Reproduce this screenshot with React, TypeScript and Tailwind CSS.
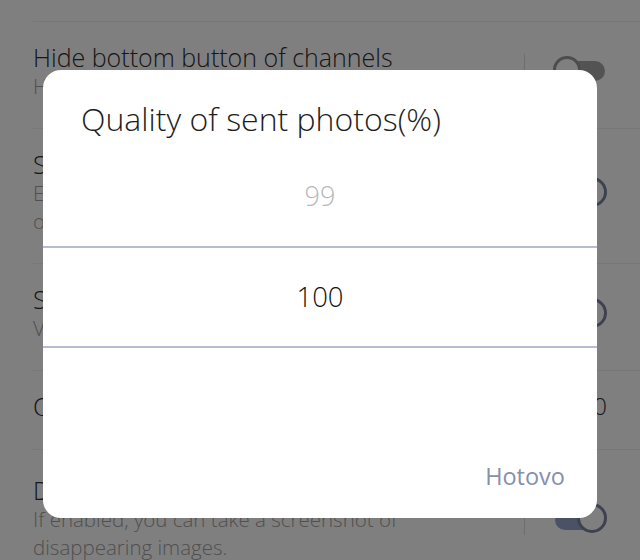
import React from "react";

type Row = {
  title: string;
  lines?: string[];
  control: "on" | "off" | "value";
  pt?: string;
};

const rows: Row[] = [
  { title: "Hide bottom button of channels", lines: ["Hide the mute button at the bottom."], control: "off" },
  {
    title: "Show original message",
    lines: ["Enable the translate button to show", "original text of the message."],
    control: "on",
  },
  { title: "Send photos as files", lines: ["Voice messages are sent in HD."], control: "on" },
  { title: "Quality of sent photos(%)", control: "value" },
  {
    title: "Disable screenshot protection",
    lines: ["If enabled, you can take a screenshot of", "disappearing images."],
    control: "on",
    pt: "pt-[25px]",
  },
];

function Toggle({ on }: { on: boolean }) {
  if (on) {
    return (
      <div className="relative flex h-[30px] w-[54px] items-center">
        <div className="ml-[2px] mt-[4px] h-[20px] w-[44px] rounded-full bg-[#98a4cc]" />
        <div className="absolute right-0 top-0 h-[30px] w-[30px] rounded-full border-[3px] border-[#7a84a0] bg-white" />
      </div>
    );
  }
  return (
    <div className="relative flex h-[30px] w-[54px] items-center">
      <div className="ml-[8px] h-[20px] w-[44px] rounded-full bg-[#a6a6a6]" />
      <div className="absolute left-0 top-0 h-[28px] w-[28px] rounded-full border-[3px] border-[#9a9a9a] bg-white" />
    </div>
  );
}

function SettingRow({ row }: { row: Row }) {
  return (
    <div className={`flex items-center border-b border-[#eeeeee] pr-[33px] ${row.pt ?? "pt-[20px]"} pb-[28px]`}>
      <div className="min-w-0 flex-1">
        <div className="text-[25px] font-light leading-[30px] text-[#2e2e2e]">{row.title}</div>
        {row.lines?.map((l) => (
          <div key={l} className="text-[20.5px] font-light leading-[28px] text-[#a0a0a0]">
            {l}
          </div>
        ))}
      </div>
      {row.control === "value" ? (
        <div className="text-[24px] font-light leading-[30px] text-[#333333]">0</div>
      ) : (
        <div className="flex items-center">
          <div className="h-[34px] w-px bg-[#dcdcdc]" />
          <div className="ml-[28px]">
            <Toggle on={row.control === "on"} />
          </div>
        </div>
      )}
    </div>
  );
}

export default function App() {
  return (
    <div
      className="relative h-[560px] w-[640px] overflow-hidden bg-white"
      style={{ fontFamily: "'Open Sans', Lato, sans-serif" }}
    >
      <div className="ml-[33px] h-[22px] border-b border-[#eeeeee]" />
      <div className="ml-[33px]">
        {rows.map((r) => (
          <SettingRow key={r.title} row={r} />
        ))}
      </div>

      <div className="absolute inset-0 flex justify-center bg-black/50 pt-[70px]">
        <div className="flex h-[448px] w-[554px] flex-col rounded-[18px] bg-white">
          <div className="h-[76px] pl-[38px] pt-[29px] text-[32px] font-light leading-[40px] text-[#1e1e1e]">
            Quality of sent photos(%)
          </div>
          <div className="flex flex-col">
            <div className="flex h-[100px] items-center justify-center text-[27px] font-light text-[#b8b8b8]">99</div>
            <div className="h-[2px] bg-[#b6bdd3]" />
            <div className="flex h-[98px] items-center justify-center text-[27.5px] font-light text-[#111111]">100</div>
            <div className="h-[2px] bg-[#b6bdd3]" />
            <div className="h-[98px]" />
          </div>
          <div className="flex justify-end pr-[32px] pt-[15px]">
            <span className="text-[23.5px] font-normal leading-[30px] text-[#8590ad]">Hotovo</span>
          </div>
        </div>
      </div>
    </div>
  );
}
